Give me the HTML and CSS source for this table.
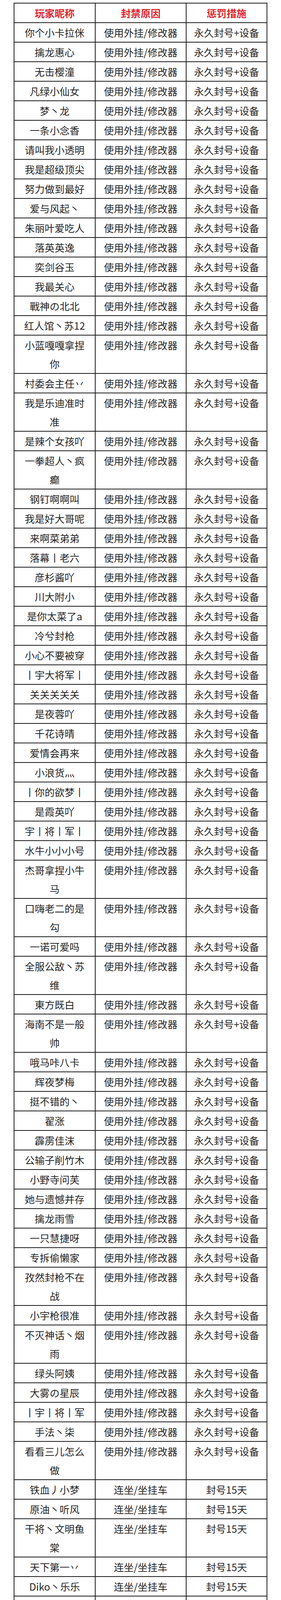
FILE: index.html
```html
<!DOCTYPE html>
<html lang="zh-CN">
<head>
<meta charset="utf-8">
<meta name="viewport" content="width=device-width, initial-scale=1">
<title>封禁名单</title>
<link rel="stylesheet" href="styles.css">
</head>
<body>
<table class="ban-table">
<colgroup><col class="c-name"><col class="c-reason"><col class="c-punish"></colgroup>
<thead>
<tr><th>玩家昵称</th><th>封禁原因</th><th>惩罚措施</th></tr>
</thead>
<tbody>
<tr><td>你个小卡拉侎</td><td>使用外挂/修改器</td><td>永久封号+设备</td></tr>
<tr><td>擒龙惠心</td><td>使用外挂/修改器</td><td>永久封号+设备</td></tr>
<tr><td>无击樱潼</td><td>使用外挂/修改器</td><td>永久封号+设备</td></tr>
<tr><td>凡绿小仙女</td><td>使用外挂/修改器</td><td>永久封号+设备</td></tr>
<tr><td>梦丶龙</td><td>使用外挂/修改器</td><td>永久封号+设备</td></tr>
<tr><td>一条小念香</td><td>使用外挂/修改器</td><td>永久封号+设备</td></tr>
<tr><td>请叫我小透明</td><td>使用外挂/修改器</td><td>永久封号+设备</td></tr>
<tr><td>我是超级顶尖</td><td>使用外挂/修改器</td><td>永久封号+设备</td></tr>
<tr><td>努力做到最好</td><td>使用外挂/修改器</td><td>永久封号+设备</td></tr>
<tr><td>爱与风起丶</td><td>使用外挂/修改器</td><td>永久封号+设备</td></tr>
<tr><td>朱丽叶爱吃人</td><td>使用外挂/修改器</td><td>永久封号+设备</td></tr>
<tr><td>落英英逸</td><td>使用外挂/修改器</td><td>永久封号+设备</td></tr>
<tr><td>奕剑谷玉</td><td>使用外挂/修改器</td><td>永久封号+设备</td></tr>
<tr><td>我最关心</td><td>使用外挂/修改器</td><td>永久封号+设备</td></tr>
<tr><td>戰神の北北</td><td>使用外挂/修改器</td><td>永久封号+设备</td></tr>
<tr><td>红人馆丶苏12</td><td>使用外挂/修改器</td><td>永久封号+设备</td></tr>
<tr><td>小蓝嘎嘎拿捏你</td><td>使用外挂/修改器</td><td>永久封号+设备</td></tr>
<tr><td>村委会主任丷</td><td>使用外挂/修改器</td><td>永久封号+设备</td></tr>
<tr><td>我是乐迪准时准</td><td>使用外挂/修改器</td><td>永久封号+设备</td></tr>
<tr><td>是辣个女孩吖</td><td>使用外挂/修改器</td><td>永久封号+设备</td></tr>
<tr><td>一拳超人丶疯癫</td><td>使用外挂/修改器</td><td>永久封号+设备</td></tr>
<tr><td>钢钉啊啊叫</td><td>使用外挂/修改器</td><td>永久封号+设备</td></tr>
<tr><td>我是好大哥呢</td><td>使用外挂/修改器</td><td>永久封号+设备</td></tr>
<tr><td>来啊菜弟弟</td><td>使用外挂/修改器</td><td>永久封号+设备</td></tr>
<tr><td>落幕丨老六</td><td>使用外挂/修改器</td><td>永久封号+设备</td></tr>
<tr><td>彦杉酱吖</td><td>使用外挂/修改器</td><td>永久封号+设备</td></tr>
<tr><td>川大附小</td><td>使用外挂/修改器</td><td>永久封号+设备</td></tr>
<tr><td>是你太菜了a</td><td>使用外挂/修改器</td><td>永久封号+设备</td></tr>
<tr><td>冷兮封枪</td><td>使用外挂/修改器</td><td>永久封号+设备</td></tr>
<tr><td>小心不要被穿</td><td>使用外挂/修改器</td><td>永久封号+设备</td></tr>
<tr><td>丨宇大将军丨</td><td>使用外挂/修改器</td><td>永久封号+设备</td></tr>
<tr><td>关关关关关</td><td>使用外挂/修改器</td><td>永久封号+设备</td></tr>
<tr><td>是夜蓉吖</td><td>使用外挂/修改器</td><td>永久封号+设备</td></tr>
<tr><td>千花诗晴</td><td>使用外挂/修改器</td><td>永久封号+设备</td></tr>
<tr><td>爱情会再来</td><td>使用外挂/修改器</td><td>永久封号+设备</td></tr>
<tr><td>小浪货灬</td><td>使用外挂/修改器</td><td>永久封号+设备</td></tr>
<tr><td>丨你的欲梦丨</td><td>使用外挂/修改器</td><td>永久封号+设备</td></tr>
<tr><td>是霞英吖</td><td>使用外挂/修改器</td><td>永久封号+设备</td></tr>
<tr><td>宇丨将丨军丨</td><td>使用外挂/修改器</td><td>永久封号+设备</td></tr>
<tr><td>水牛小小小号</td><td>使用外挂/修改器</td><td>永久封号+设备</td></tr>
<tr><td>杰哥拿捏小牛马</td><td>使用外挂/修改器</td><td>永久封号+设备</td></tr>
<tr><td>口嗨老二的是勾</td><td>使用外挂/修改器</td><td>永久封号+设备</td></tr>
<tr><td>一诺可爱吗</td><td>使用外挂/修改器</td><td>永久封号+设备</td></tr>
<tr><td>全服公敌丶苏维</td><td>使用外挂/修改器</td><td>永久封号+设备</td></tr>
<tr><td>東方既白</td><td>使用外挂/修改器</td><td>永久封号+设备</td></tr>
<tr><td>海南不是一般帅</td><td>使用外挂/修改器</td><td>永久封号+设备</td></tr>
<tr><td>哦马咔八卡</td><td>使用外挂/修改器</td><td>永久封号+设备</td></tr>
<tr><td>辉夜梦梅</td><td>使用外挂/修改器</td><td>永久封号+设备</td></tr>
<tr><td>挺不错的丶</td><td>使用外挂/修改器</td><td>永久封号+设备</td></tr>
<tr><td>翟涨</td><td>使用外挂/修改器</td><td>永久封号+设备</td></tr>
<tr><td>霹雳佳沫</td><td>使用外挂/修改器</td><td>永久封号+设备</td></tr>
<tr><td>公输子削竹木</td><td>使用外挂/修改器</td><td>永久封号+设备</td></tr>
<tr><td>小野寺问芙</td><td>使用外挂/修改器</td><td>永久封号+设备</td></tr>
<tr><td>她与遗憾并存</td><td>使用外挂/修改器</td><td>永久封号+设备</td></tr>
<tr><td>擒龙雨雪</td><td>使用外挂/修改器</td><td>永久封号+设备</td></tr>
<tr><td>一只慧捷呀</td><td>使用外挂/修改器</td><td>永久封号+设备</td></tr>
<tr><td>专拆偷懒家</td><td>使用外挂/修改器</td><td>永久封号+设备</td></tr>
<tr><td>孜然封枪不在战</td><td>使用外挂/修改器</td><td>永久封号+设备</td></tr>
<tr><td>小宇枪很准</td><td>使用外挂/修改器</td><td>永久封号+设备</td></tr>
<tr><td>不灭神话丶烟雨</td><td>使用外挂/修改器</td><td>永久封号+设备</td></tr>
<tr><td>绿头阿姨</td><td>使用外挂/修改器</td><td>永久封号+设备</td></tr>
<tr><td>大雾の星辰</td><td>使用外挂/修改器</td><td>永久封号+设备</td></tr>
<tr><td>丨宇丨将丨军</td><td>使用外挂/修改器</td><td>永久封号+设备</td></tr>
<tr><td>手法丶柒</td><td>使用外挂/修改器</td><td>永久封号+设备</td></tr>
<tr><td>看看三儿怎么做</td><td>使用外挂/修改器</td><td>永久封号+设备</td></tr>
<tr><td>铁血丿小梦</td><td>连坐/坐挂车</td><td>封号15天</td></tr>
<tr><td>原油丶听风</td><td>连坐/坐挂车</td><td>封号15天</td></tr>
<tr><td>干将丶文明鱼棠</td><td>连坐/坐挂车</td><td>封号15天</td></tr>
<tr><td>天下第一丷</td><td>连坐/坐挂车</td><td>封号15天</td></tr>
<tr><td>Diko丶乐乐</td><td>连坐/坐挂车</td><td>封号15天</td></tr>
<tr><td>晨曦丶X</td><td>连坐/坐挂车</td><td>封号15天</td></tr>
<tr><td>拿捏丶阿喵</td><td>连坐/坐挂车</td><td>封号15天</td></tr>
<tr><td>丨不知名牛马丨</td><td>连坐/坐挂车</td><td>封号15天</td></tr>
<tr><td>巴顿很深情丶</td><td>连坐/坐挂车</td><td>封号15天</td></tr>
<tr><td>樱木丷</td><td>连坐/坐挂车</td><td>封号15天</td></tr>
<tr><td>仙战丨赵九</td><td>连坐/坐挂车</td><td>封号15天</td></tr>
<tr><td>小發吖</td><td>连坐/坐挂车</td><td>封号15天</td></tr>
<tr><td>大儿有俩溜溜球</td><td>连坐/坐挂车</td><td>封号15天</td></tr>
<tr><td>琅牙晴阳</td><td>连坐/坐挂车</td><td>封号15天</td></tr>
<tr><td>爱意开荒</td><td>连坐/坐挂车</td><td>封号15天</td></tr>
<tr><td>写对白</td><td>连坐/坐挂车</td><td>封号15天</td></tr>
<tr><td>酥阮</td><td>连坐/坐挂车</td><td>封号15天</td></tr>
<tr><td>丨玩偶姐姐</td><td>连坐/坐挂车</td><td>封号15天</td></tr>
<tr><td>巅峰亻婧箐</td><td>连坐/坐挂车</td><td>封号15天</td></tr>
<tr><td>博的然</td><td>连坐/坐挂车</td><td>封号15天</td></tr>
<tr><td>如何诠释情</td><td>连坐/坐挂车</td><td>封号15天</td></tr>
<tr><td>iqoo阿龙</td><td>连坐/坐挂车</td><td>封号15天</td></tr>
<tr><td>拿c4炸你祖坟</td><td>连坐/坐挂车</td><td>封号15天</td></tr>
<tr><td>天河河</td><td>连坐/坐挂车</td><td>封号15天</td></tr>
<tr><td>冷安安呐</td><td>连坐/坐挂车</td><td>封号15天</td></tr>
<tr><td>17也不负众望</td><td>连坐/坐挂车</td><td>封号15天</td></tr>
<tr><td>月牧三歳</td><td>连坐/坐挂车</td><td>封号15天</td></tr>
<tr><td>我就是神造化</td><td>连坐/坐挂车</td><td>封号15天</td></tr>
<tr><td>老包封枪不再戳</td><td>连坐/坐挂车</td><td>封号15天</td></tr>
<tr><td>挨刀砍</td><td>连坐/坐挂车</td><td>封号15天</td></tr>
<tr><td>亿个宝</td><td>连坐/坐挂车</td><td>封号15天</td></tr>
</tbody>
</table>
</body>
</html>
```
FILE: styles.css
```css
html {
  -webkit-text-size-adjust: 100%;
  text-size-adjust: 100%;
}

html, body {
  margin: 0;
  padding: 0;
  background: #ffffff;
}

body {
  font-family: "Noto Sans CJK SC", "Noto Sans", sans-serif;
  color: #262626;
}

.ban-table {
  width: 648px;
  margin: 7px auto 0;
  border-collapse: collapse;
  table-layout: fixed;
  font-size: 25.5px;
  line-height: 48px;
}

.c-name { width: 208px; }
.c-reason { width: 233px; }
.c-punish { width: 207px; }

.ban-table th,
.ban-table td {
  height: 48px;
  border: 2px solid #1a1a1a;
  padding: 0 16px;
  text-align: center;
  vertical-align: top;
  font-weight: 400;
  line-height: 48px;
  word-break: break-all;
}

.ban-table th {
  color: #e0262b;
  font-weight: 700;
}
```
